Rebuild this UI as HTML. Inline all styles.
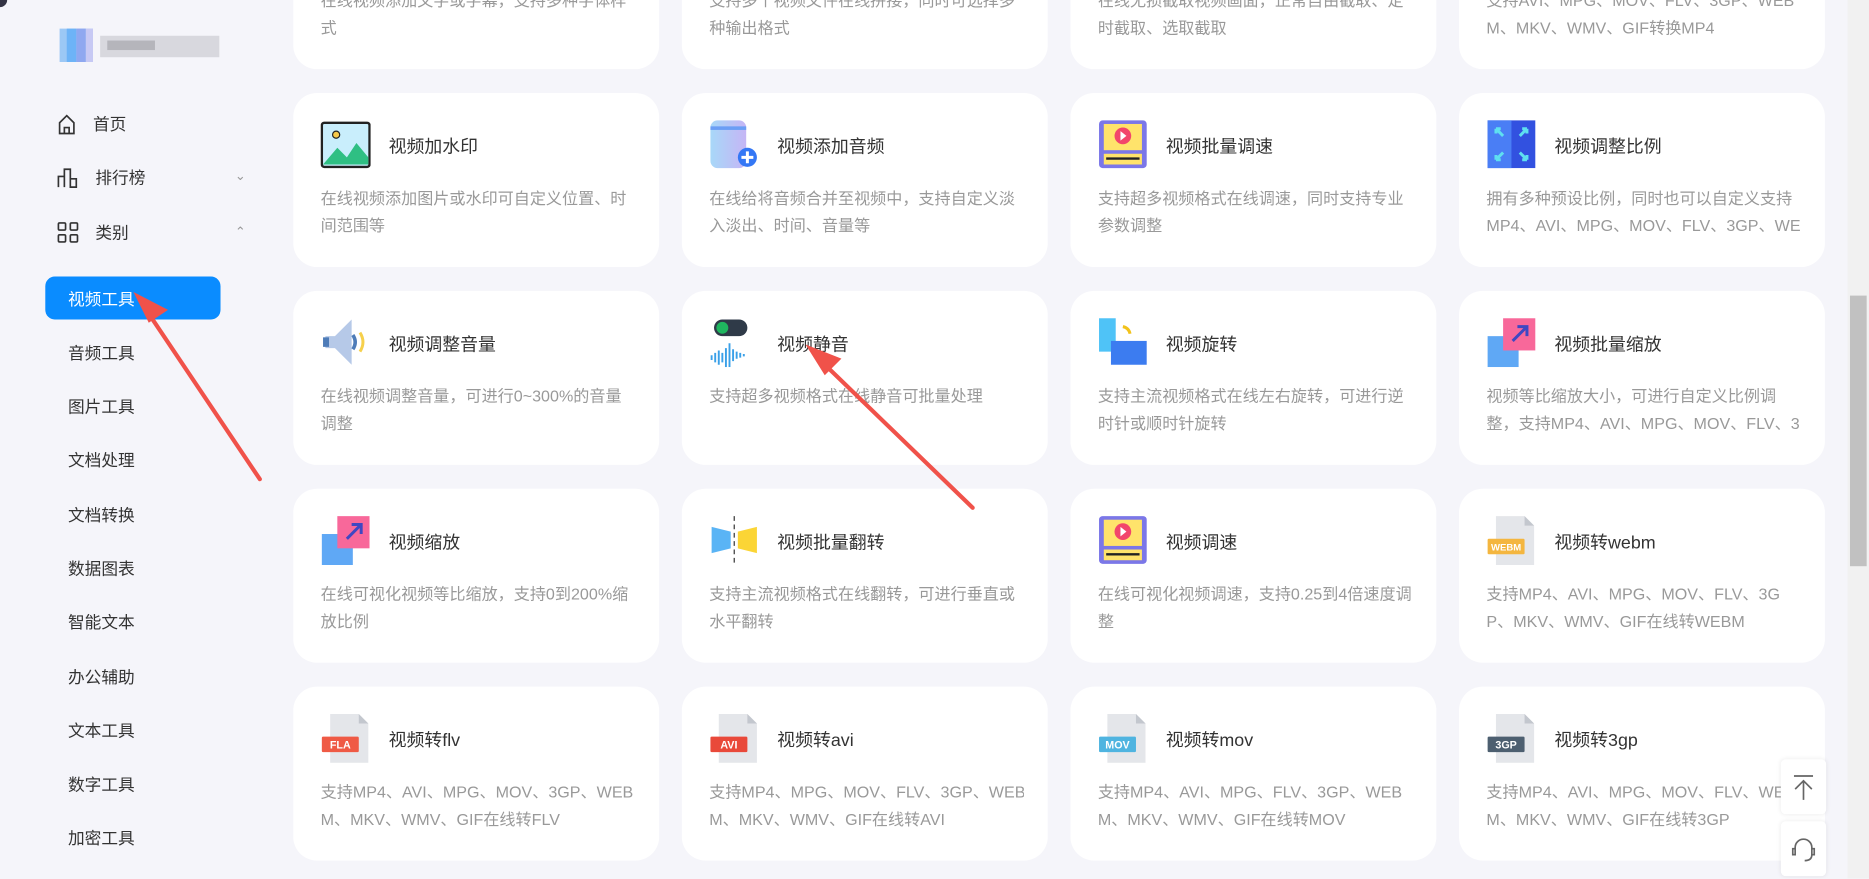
<!DOCTYPE html>
<html><head><meta charset="utf-8"><style>
*{margin:0;padding:0;box-sizing:border-box}
html,body{width:1869px;height:879px;overflow:hidden;background:#f5f5fa}
body{font-family:"Liberation Sans","Noto Sans CJK SC",sans-serif}
#w{position:absolute;left:0;top:0;width:1568px;height:737px;transform:scale(1.192);transform-origin:0 0;background:#f5f5fa;overflow:hidden}
.logo{position:absolute;left:42px;top:18px;width:143px;height:40px}
.m{position:absolute;left:48px;font-size:14px;color:#333;display:flex;align-items:center}
.m span{margin-left:14px}
.chev{position:absolute;left:197px;font-size:11px;color:#999}
.act{position:absolute;left:38px;top:232px;width:147px;height:36px;background:#0a8cff;border-radius:8px}
.s{position:absolute;left:57px;font-size:14px;color:#333}
.card{position:absolute;width:307px;height:146px;background:#fff;border-radius:20px;overflow:hidden}
.ic{position:absolute;left:23px;top:22px;width:42px;height:42px}
.t{position:absolute;left:80px;top:34px;font-size:15px;color:#333}
.d{position:absolute;left:23px;top:77px;width:264px;font-size:13.5px;line-height:23px;color:#999;white-space:nowrap;overflow:hidden}
.sb{position:absolute;left:1550px;top:0;width:18px;height:737px;background:#f1f1f1}
.th{position:absolute;left:1552px;top:248px;width:14px;height:227px;background:#c1c1c1}
.fb{position:absolute;left:1494px;width:38px;height:46px;background:#fff;border-radius:4px;box-shadow:0 0 4px rgba(0,0,0,.08)}
</style></head><body><div id="w">
<div style="position:absolute;left:0;top:0;width:6px;height:6px;background:#334;border-bottom-right-radius:6px"></div>
<svg class="logo" viewBox="0 0 143 40"><rect x="8" y="6" width="28" height="28" fill="#9cc8f5"/><rect x="14" y="6" width="8" height="28" fill="#6db3f7"/><rect x="22" y="6" width="8" height="28" fill="#8fa8f0"/><rect x="42" y="12" width="100" height="18" fill="#d8d8de"/><rect x="48" y="16" width="40" height="8" fill="#b5b5bb"/><rect x="30" y="6" width="6" height="28" fill="#c7c9f4"/></svg>
<div class="m" style="top:94px"><svg width="16" height="18" viewBox="0 0 16 18" fill="none" stroke="#333" stroke-width="1.4"><path d="M2 8 8 2l6 6v9H2z M6 17v-5h4v5"/></svg><span>首页</span></div>
<div class="m" style="top:139px"><svg width="18" height="18" viewBox="0 0 18 18" fill="none" stroke="#333" stroke-width="1.4"><path d="M1 17V8h5v9M6 17V2h5v15M11 17v-7h5v7z"/></svg><span>排行榜</span></div>
<div class="chev" style="top:141px">&#8964;</div>
<div class="m" style="top:185px"><svg width="18" height="18" viewBox="0 0 18 18" fill="none" stroke="#333" stroke-width="1.4"><rect x="1" y="1" width="6" height="6" rx="1"/><rect x="11" y="1" width="6" height="6" rx="1"/><rect x="1" y="11" width="6" height="6" rx="1"/><rect x="11" y="11" width="6" height="6" rx="1"/></svg><span>类别</span></div>
<div class="chev" style="top:188px">&#8963;</div>
<div class="act"></div>
<div class="s" style="top:241px;color:#fff">视频工具</div>
<div class="s" style="top:286px">音频工具</div>
<div class="s" style="top:331px">图片工具</div>
<div class="s" style="top:376px">文档处理</div>
<div class="s" style="top:422px">文档转换</div>
<div class="s" style="top:467px">数据图表</div>
<div class="s" style="top:512px">智能文本</div>
<div class="s" style="top:558px">办公辅助</div>
<div class="s" style="top:603px">文本工具</div>
<div class="s" style="top:648px">数字工具</div>
<div class="s" style="top:693px">加密工具</div>

<div class="card" style="left:246px;top:-88px"><div class="d">在线视频添加文字或字幕，支持多种字体样<br>式</div></div>
<div class="card" style="left:572px;top:-88px"><div class="d">支持多个视频文件在线拼接，同时可选择多<br>种输出格式</div></div>
<div class="card" style="left:898px;top:-88px"><div class="d">在线无损截取视频画面，正常自由截取、定<br>时截取、选取截取</div></div>
<div class="card" style="left:1224px;top:-88px"><div class="d">支持AVI、MPG、MOV、FLV、3GP、WEB<br>M、MKV、WMV、GIF转换MP4</div></div>

<div class="card" style="left:246px;top:78px"><svg class="ic" viewBox="0 0 42 42"><rect x="1" y="3" width="40" height="37" rx="2" fill="#c9eefc" stroke="#222" stroke-width="2"/><path d="M2 38 14 24l8 8 8-12 10 12v6H2z" fill="#2fbf83"/><circle cx="13" cy="13" r="3" fill="#f6c94a" stroke="#222"/></svg><div class="t">视频加水印</div><div class="d">在线视频添加图片或水印可自定义位置、时<br>间范围等</div></div>
<div class="card" style="left:572px;top:78px"><svg class="ic" viewBox="0 0 42 42"><defs><linearGradient id="g1" x1="0" x2="1"><stop offset="0" stop-color="#a8d8f8"/><stop offset="1" stop-color="#c5b5f5"/></linearGradient></defs><rect x="1" y="1" width="30" height="40" rx="6" fill="url(#g1)"/><rect x="1" y="6" width="30" height="3" fill="#6b9ef5"/><circle cx="32" cy="32" r="8" fill="#3477f5"/><path d="M32 27v10M27 32h10" stroke="#fff" stroke-width="2.5"/></svg><div class="t">视频添加音频</div><div class="d">在线给将音频合并至视频中，支持自定义淡<br>入淡出、时间、音量等</div></div>
<div class="card" style="left:898px;top:78px"><svg class="ic" viewBox="0 0 42 42"><rect x="1" y="1" width="40" height="40" rx="3" fill="#7b77e8"/><rect x="5" y="4" width="32" height="22" fill="#ffe36b"/><circle cx="21" cy="14" r="7" fill="#f2456b"/><path d="M19 10v8l5-4z" fill="#fff"/><rect x="5" y="29" width="32" height="9" fill="#ffe36b"/><path d="M7 33h28" stroke="#222" stroke-width="2"/></svg><div class="t">视频批量调速</div><div class="d">支持超多视频格式在线调速，同时支持专业<br>参数调整</div></div>
<div class="card" style="left:1224px;top:78px"><svg class="ic" viewBox="0 0 42 42"><rect x="1" y="1" width="40" height="40" fill="#3251e0"/><rect x="1" y="1" width="20" height="40" fill="#4a7ef5"/><path d="M8 8l6 6M8 8v4M8 8h4M34 8l-6 6M34 8v4M34 8h-4M8 34l6-6M8 34v-4M8 34h4M34 34l-6-6M34 34v-4M34 34h-4" stroke="#5ee0f0" stroke-width="2.5"/></svg><div class="t">视频调整比例</div><div class="d">拥有多种预设比例，同时也可以自定义支持<br>MP4、AVI、MPG、MOV、FLV、3GP、WE</div></div>

<div class="card" style="left:246px;top:244px"><svg class="ic" viewBox="0 0 42 42"><path d="M4 16h8l14-14v38L12 26H4z" fill="#b6c9e8"/><rect x="2" y="17" width="5" height="8" fill="#4e7cb8"/><path d="M27 15q4 6 0 12" stroke="#4e7cb8" stroke-width="3" fill="none"/><path d="M33 13q5 8 0 16" stroke="#f6d04c" stroke-width="2.5" fill="none"/></svg><div class="t">视频调整音量</div><div class="d">在线视频调整音量，可进行0~300%的音量<br>调整</div></div>
<div class="card" style="left:572px;top:244px"><svg class="ic" viewBox="0 0 42 42"><rect x="4" y="2" width="28" height="14" rx="7" fill="#2f3a48"/><circle cx="11" cy="9" r="5" fill="#1fb65f"/><path d="M2 32v4M5 30v8M8 28v12M11 30v8M14 26v16M17 22v20M20 27v10M23 29v6M26 30v4M29 31v2" stroke="#3aa0e8" stroke-width="1.6"/></svg><div class="t">视频静音</div><div class="d">支持超多视频格式在线静音可批量处理</div></div>
<div class="card" style="left:898px;top:244px"><svg class="ic" viewBox="0 0 42 42"><rect x="1" y="1" width="14" height="28" fill="#4fc3f7"/><rect x="11" y="20" width="30" height="20" fill="#3c7cf0"/><path d="M21 8q5 1 6 6" stroke="#f2c21b" stroke-width="2.5" fill="none"/></svg><div class="t">视频旋转</div><div class="d">支持主流视频格式在线左右旋转，可进行逆<br>时针或顺时针旋转</div></div>
<div class="card" style="left:1224px;top:244px"><svg class="ic" viewBox="0 0 42 42"><rect x="1" y="16" width="26" height="26" fill="#5fa8f5"/><rect x="14" y="1" width="27" height="27" fill="#f8689a"/><path d="M22 20l12-12M26 8h8v8" stroke="#3f47c2" stroke-width="2.5" fill="none"/></svg><div class="t">视频批量缩放</div><div class="d">视频等比缩放大小，可进行自定义比例调<br>整，支持MP4、AVI、MPG、MOV、FLV、3</div></div>

<div class="card" style="left:246px;top:410px"><svg class="ic" viewBox="0 0 42 42"><rect x="1" y="16" width="26" height="26" fill="#5fa8f5"/><rect x="14" y="1" width="27" height="27" fill="#f8689a"/><path d="M22 20l12-12M26 8h8v8" stroke="#3f47c2" stroke-width="2.5" fill="none"/></svg><div class="t">视频缩放</div><div class="d">在线可视化视频等比缩放，支持0到200%缩<br>放比例</div></div>
<div class="card" style="left:572px;top:410px"><svg class="ic" viewBox="0 0 42 42"><path d="M2 10l16 4v14L2 32z" fill="#5ab4f5"/><path d="M40 10l-16 4v14l16 4z" fill="#fbd535"/><path d="M21 1v40" stroke="#555" stroke-width="1.2" stroke-dasharray="4 3"/></svg><div class="t">视频批量翻转</div><div class="d">支持主流视频格式在线翻转，可进行垂直或<br>水平翻转</div></div>
<div class="card" style="left:898px;top:410px"><svg class="ic" viewBox="0 0 42 42"><rect x="1" y="1" width="40" height="40" rx="3" fill="#7b77e8"/><rect x="5" y="4" width="32" height="22" fill="#ffe36b"/><circle cx="21" cy="14" r="7" fill="#f2456b"/><path d="M19 10v8l5-4z" fill="#fff"/><rect x="5" y="29" width="32" height="9" fill="#ffe36b"/><path d="M7 33h28" stroke="#222" stroke-width="2"/></svg><div class="t">视频调速</div><div class="d">在线可视化视频调速，支持0.25到4倍速度调<br>整</div></div>
<div class="card" style="left:1224px;top:410px"><svg class="ic" viewBox="0 0 42 42"><path d="M8 1h24l8 8v33H8z" fill="#e4e6ea"/><path d="M32 1v8h8z" fill="#c3c7ce"/><rect x="1" y="20" width="31" height="13" rx="1" fill="#f4b63f"/><text x="16.5" y="30" font-size="8" fill="#fff" text-anchor="middle" font-family="Liberation Sans" font-weight="bold">WEBM</text></svg><div class="t">视频转webm</div><div class="d">支持MP4、AVI、MPG、MOV、FLV、3G<br>P、MKV、WMV、GIF在线转WEBM</div></div>

<div class="card" style="left:246px;top:576px"><svg class="ic" viewBox="0 0 42 42"><path d="M8 1h24l8 8v33H8z" fill="#e4e6ea"/><path d="M32 1v8h8z" fill="#c3c7ce"/><rect x="1" y="20" width="31" height="13" rx="1" fill="#ef5a45"/><text x="16.5" y="30" font-size="9" fill="#fff" text-anchor="middle" font-family="Liberation Sans" font-weight="bold">FLA</text></svg><div class="t">视频转flv</div><div class="d">支持MP4、AVI、MPG、MOV、3GP、WEB<br>M、MKV、WMV、GIF在线转FLV</div></div>
<div class="card" style="left:572px;top:576px"><svg class="ic" viewBox="0 0 42 42"><path d="M8 1h24l8 8v33H8z" fill="#e4e6ea"/><path d="M32 1v8h8z" fill="#c3c7ce"/><rect x="1" y="20" width="31" height="13" rx="1" fill="#e9493a"/><text x="16.5" y="30" font-size="9" fill="#fff" text-anchor="middle" font-family="Liberation Sans" font-weight="bold">AVI</text></svg><div class="t">视频转avi</div><div class="d">支持MP4、MPG、MOV、FLV、3GP、WEB<br>M、MKV、WMV、GIF在线转AVI</div></div>
<div class="card" style="left:898px;top:576px"><svg class="ic" viewBox="0 0 42 42"><path d="M8 1h24l8 8v33H8z" fill="#e4e6ea"/><path d="M32 1v8h8z" fill="#c3c7ce"/><rect x="1" y="20" width="31" height="13" rx="1" fill="#4fb4e0"/><text x="16.5" y="30" font-size="9" fill="#fff" text-anchor="middle" font-family="Liberation Sans" font-weight="bold">MOV</text></svg><div class="t">视频转mov</div><div class="d">支持MP4、AVI、MPG、FLV、3GP、WEB<br>M、MKV、WMV、GIF在线转MOV</div></div>
<div class="card" style="left:1224px;top:576px"><svg class="ic" viewBox="0 0 42 42"><path d="M8 1h24l8 8v33H8z" fill="#e4e6ea"/><path d="M32 1v8h8z" fill="#c3c7ce"/><rect x="1" y="20" width="31" height="13" rx="1" fill="#4d5f70"/><text x="16.5" y="30" font-size="9" fill="#fff" text-anchor="middle" font-family="Liberation Sans" font-weight="bold">3GP</text></svg><div class="t">视频转3gp</div><div class="d">支持MP4、AVI、MPG、MOV、FLV、WEB<br>M、MKV、WMV、GIF在线转3GP</div></div>

<div class="fb" style="top:637px"><svg width="38" height="46" viewBox="0 0 38 46" fill="none" stroke="#666" stroke-width="1.4"><path d="M11 14h16M19 34V18M12 25l7-7 7 7"/></svg></div>
<div class="fb" style="top:689px"><svg width="38" height="46" viewBox="0 0 38 46" fill="none" stroke="#666" stroke-width="1.4"><path d="M12 27v-5a7 7 0 0 1 14 0v5M12 23h-2v5h2zM26 23h2v5h-2zM26 28q0 5-6 5"/></svg></div>

<svg style="position:absolute;left:0;top:0" width="1568" height="737"><g fill="#f0524a" stroke="#f0524a" stroke-linecap="round"><path d="M218 402 124 262" stroke-width="3.5"/><path d="M113 246l27 14-15 10z"/><path d="M816 426 690 304" stroke-width="3.5"/><path d="M677 290l28 11-13 13z"/></g></svg>

<div class="sb"></div><div class="th"></div>
</div></body></html>
